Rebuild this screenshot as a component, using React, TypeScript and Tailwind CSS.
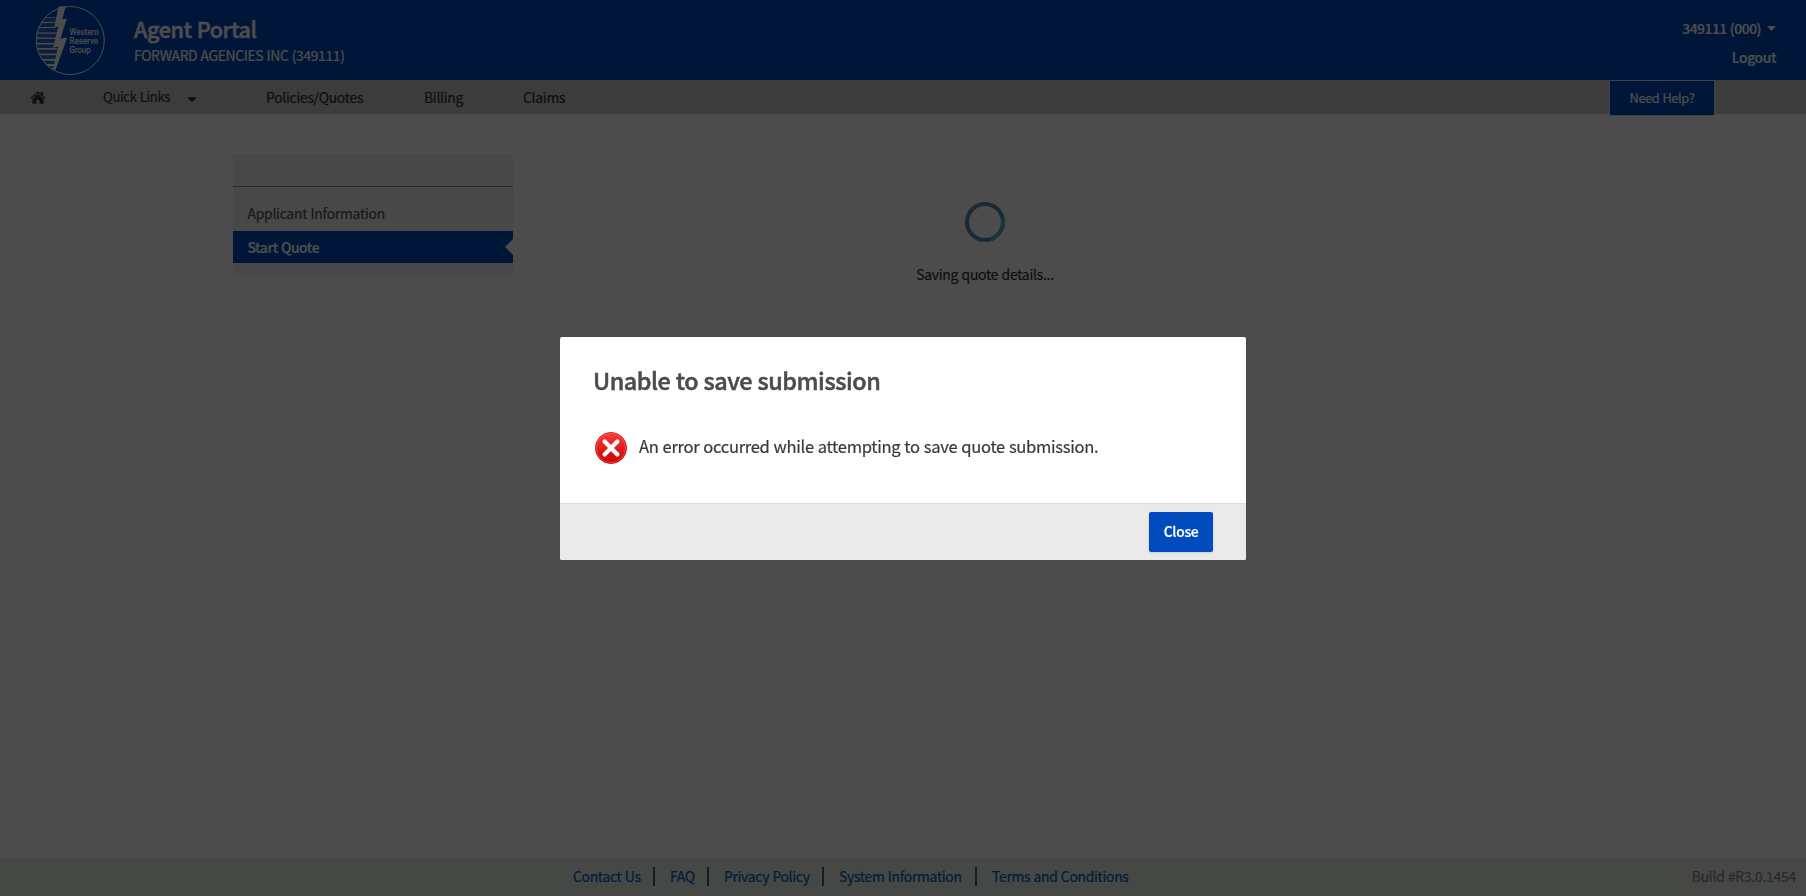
import React from "react";
import { FaCaretDown } from "react-icons/fa";

const stripes = [
  { y: 17, h: 0.6 },
  { y: 22, h: 1 },
  { y: 27, h: 1 },
  { y: 32.5, h: 1.2 },
  { y: 37.5, h: 1.3 },
  { y: 43, h: 1.4 },
  { y: 48, h: 1.6 },
  { y: 53.5, h: 1.7 },
  { y: 59, h: 1.8 },
  { y: 64, h: 2 },
  { y: 68, h: 1.6 },
];

function Logo() {
  return (
    <svg className="block h-20 w-[134px] shrink-0" viewBox="0 0 134 80">
      <defs>
        <clipPath id="disc">
          <circle cx="70.3" cy="40.5" r="34" />
        </clipPath>
        <clipPath id="leftOfBolt">
          <path d="M30 0H58L54 27L58 29L53 47L58 49L53 70L50 80H30Z" />
        </clipPath>
      </defs>
      <g clipPath="url(#disc)">
        <g clipPath="url(#leftOfBolt)">
          <rect x="30" y="17" width="40" height="60" fill="#fff" opacity="0.15" />
          {stripes.map((s) => (
            <rect key={s.y} x="30" y={s.y} width="40" height={s.h} fill="#fff" />
          ))}
        </g>
      </g>
      <path d="M58.5 6.5L65.8 6L62.3 19.5L66.8 18.5L60.5 38.5L67.3 37.5L55.5 70L53 68.5L58.3 46.5L53 48L58.3 26.5L54 28Z" fill="#fff" />
      <circle cx="70.3" cy="40.5" r="34" fill="none" stroke="#fff" strokeWidth="1" />
      <g fill="#fff" fontFamily="Roboto, sans-serif" fontSize="8.8" fontWeight="500">
        <text x="69.5" y="34.8" textLength="29" lengthAdjust="spacingAndGlyphs">Western</text>
        <text x="69.5" y="44" textLength="28.5" lengthAdjust="spacingAndGlyphs">Reserve</text>
        <text x="69.5" y="53" textLength="21" lengthAdjust="spacingAndGlyphs">Group</text>
      </g>
    </svg>
  );
}

function HomeIcon() {
  return (
    <svg className="ml-[30px] block h-[13px] w-[16px]" viewBox="0 0 16 13" fill="#333">
      <path d="M8 0.2L10.9 2.7V0.8H13.2V4.7L15.8 6.9L15 7.8L8 1.9L1 7.8L0.2 6.9Z" />
      <path d="M8 3L13.6 7.7V12.2Q13.6 12.8 13 12.8H9.5V9H6.5V12.8H3Q2.4 12.8 2.4 12.2V7.7Z" />
    </svg>
  );
}

function ErrorIcon() {
  return (
    <svg className="block size-8 shrink-0" viewBox="0 0 32 32">
      <defs>
        <linearGradient id="red" x1="0" y1="0" x2="0" y2="1">
          <stop offset="0" stopColor="#fb3b3b" />
          <stop offset="1" stopColor="#c90000" />
        </linearGradient>
      </defs>
      <circle cx="16" cy="16" r="15.6" fill="url(#red)" stroke="#c81414" strokeWidth="0.8" />
      <circle cx="16" cy="16" r="14.6" fill="none" stroke="#ff7a6a" strokeWidth="0.7" opacity="0.7" />
      <path d="M9.6 9.6L22.4 22.4M22.4 9.6L9.6 22.4" stroke="#fff" strokeWidth="4.2" strokeLinecap="round" />
    </svg>
  );
}

function Spinner() {
  return (
    <svg className="block size-10" viewBox="0 0 40 40">
      <circle cx="20" cy="20" r="18" fill="none" stroke="#5b88b4" strokeWidth="4" />
      <path d="M37.3 15A18 18 0 0 1 24.8 37.3" fill="none" stroke="#4fb5c4" strokeWidth="4" />
    </svg>
  );
}

function Header() {
  return (
    <header className="flex h-20 bg-[#004bbd] text-white">
      <Logo />
      <div className="flex flex-col pt-[15px] whitespace-nowrap">
        <div className="text-[21.6px] leading-[28px] font-medium tracking-[-0.42px] [-webkit-text-stroke:0.5px]">Agent Portal</div>
        <div className="mt-0.5 text-[13.9px] leading-5 tracking-[-0.35px]">FORWARD AGENCIES INC (349111)</div>
      </div>
      <div className="ml-auto flex flex-col items-end pt-[18px] pr-[30px] text-[13.9px] font-medium tracking-[-0.5px]">
        <div className="flex items-center gap-1.5 leading-5">
          349111 (000)
          <svg className="mt-px h-[5px] w-[9px]" viewBox="0 0 9 5">
            <path d="M0 0H9L4.5 5Z" fill="#fff" />
          </svg>
        </div>
        <div className="mt-[9px] leading-5 tracking-[-0.4px]">Logout</div>
      </div>
    </header>
  );
}

function NavBar() {
  return (
    <nav className="flex h-[34px] items-center bg-[#c8c8c8] text-[13.9px] leading-5 tracking-[-0.26px] whitespace-nowrap text-[#333]">
      <HomeIcon />
      <span className="ml-[57px] w-[83px] text-[13.1px] tracking-[-0.32px]">Quick Links</span>
      <FaCaretDown className="mt-1 w-3" />
      <span className="ml-[68px] w-[158px]">Policies/Quotes</span>
      <span className="w-[99px]">Billing</span>
      <span>Claims</span>
      <div className="mr-[91px] ml-auto h-[36px] w-[106px] self-start border border-[#ddd] bg-[#004bbd] text-center text-[12.7px] leading-[34px] tracking-[-0.32px] text-white">
        Need Help?
      </div>
    </nav>
  );
}

function Sidebar() {
  return (
    <aside className="ml-[233px] flex h-[121px] w-[280px] flex-col bg-[#f0f0f0] text-[13.9px] text-[#555]">
      <div className="h-[33px] border-b border-[#888]" />
      <div className="mt-2.5 mb-0.5 h-8 pl-[14.5px] leading-8 tracking-[-0.25px]">Applicant Information</div>
      <div className="flex h-8 items-center justify-between bg-[#004bbd] pl-[14.5px] font-medium tracking-[-0.44px] text-white">
        <span className="leading-8">Start Quote</span>
        <svg className="h-4 w-2" viewBox="0 0 8 16">
          <path d="M8 0V16L0 8Z" fill="#fff" />
        </svg>
      </div>
    </aside>
  );
}

const links = [
  { label: "Contact Us", width: "w-[80px]" },
  { label: "FAQ", width: "w-[37px]" },
  { label: "Privacy Policy", width: "w-[98px]" },
  { label: "System Information", width: "w-[136px]" },
  { label: "Terms and Conditions", width: "w-[140px]" },
];

function Footer() {
  return (
    <footer className="flex h-[39px] items-center bg-[#eaf0ec] pl-[573px] text-[13.9px] tracking-[-0.3px] whitespace-nowrap">
      {links.map((l, i) => (
        <div key={l.label} className="flex items-center text-[#0062b8]">
          <span className={`${l.width} -mt-0.5 leading-5`}>{l.label}</span>
          {i < links.length - 1 && <i className="mr-[15px] h-[19px] w-0.5 bg-[#555a66]" />}
        </div>
      ))}
      <span className="-mt-0.5 mr-[10px] ml-auto leading-5 tracking-[-0.24px] text-[#888]">Build #R3.0.1454</span>
    </footer>
  );
}

function Dialog() {
  return (
    <div className="fixed inset-0 flex items-start justify-center bg-black/70 pt-[337px]">
      <div role="dialog" className="flex h-[223px] w-[686px] flex-col overflow-hidden rounded-[2px] bg-white">
        <div className="flex h-[166px] flex-col px-[33px]">
          <h1 className="mt-[27px] text-[23.4px] leading-8 font-medium tracking-[-0.45px] text-[#4c4c4c] [-webkit-text-stroke:0.5px]">
            Unable to save submission
          </h1>
          <div className="mt-9 flex items-center gap-3 pl-0.5 text-[16.6px] tracking-[-0.31px] text-[#3a3a3a]">
            <ErrorIcon />
            <span className="-mt-1 leading-8">An error occurred while attempting to save quote submission.</span>
          </div>
        </div>
        <div className="flex h-[57px] items-start justify-end border-t border-[#dcdcdc] bg-[#eaeaea] pt-2 pr-[33px]">
          <button className="h-10 w-16 rounded-[2px] bg-[#004bbd] pb-0.5 text-[13.9px] leading-[38px] font-medium tracking-[-0.3px] text-white shadow-sm">
            Close
          </button>
        </div>
      </div>
    </div>
  );
}

export default function App() {
  return (
    <div className="flex h-[896px] w-[1806px] flex-col overflow-hidden bg-white font-['Noto_Sans_CJK_SC',sans-serif] [word-spacing:0.5px] [-webkit-text-stroke:0.2px]">
      <Header />
      <NavBar />
      <main className="flex flex-1 items-start pt-10">
        <Sidebar />
        <section className="ml-[372px] flex w-[200px] flex-col items-center pt-12 text-[13.9px] text-[#333]">
          <Spinner />
          <p className="mt-[22px] leading-5 tracking-[-0.25px]">Saving quote details...</p>
        </section>
      </main>
      <Footer />
      <Dialog />
    </div>
  );
}
